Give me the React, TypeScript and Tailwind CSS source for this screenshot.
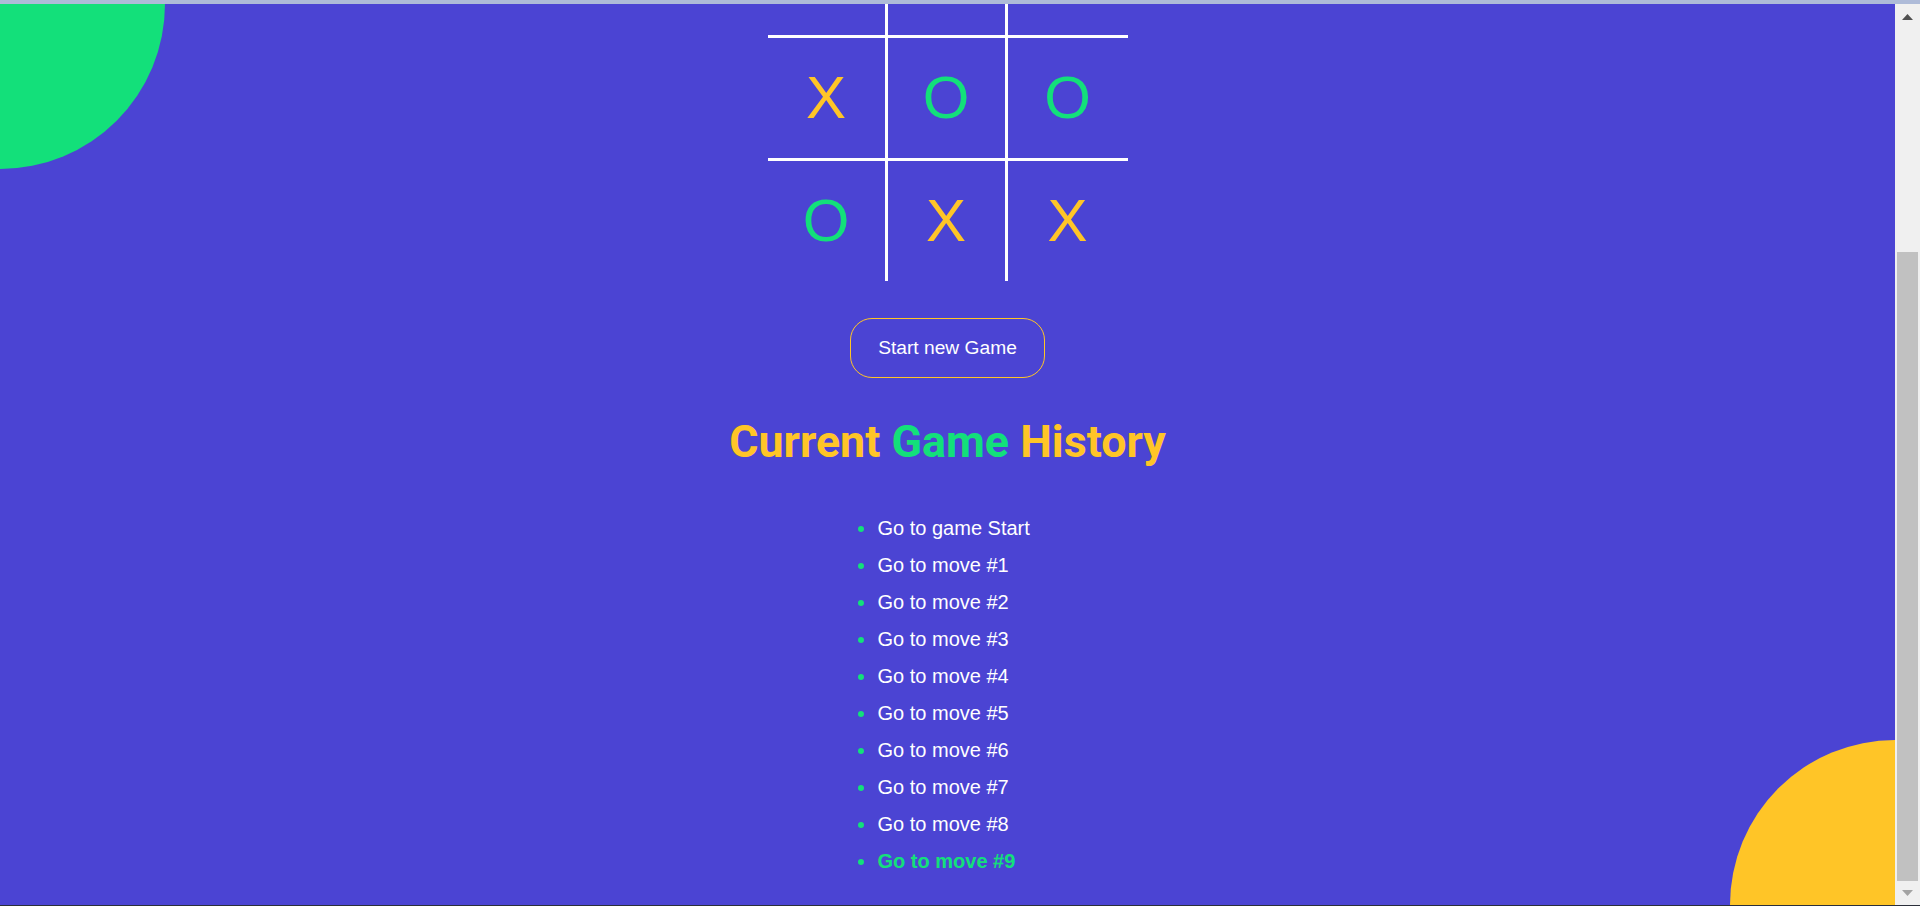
import React from "react";

const board: ("X" | "O" | "")[] = ["", "", "", "X", "O", "O", "O", "X", "X"];

function Cell({ v, i }: { v: "X" | "O" | ""; i: number }) {
  const col = i % 3;
  const row = Math.floor(i / 3);
  const rightBorder = col < 2 ? "border-r-[3px]" : "";
  const bottomBorder = row < 2 ? "border-b-[3px] h-[123px]" : "h-[120px]";
  const color = v === "X" ? "text-[#ffc527]" : "text-[#13e07a]";
  return (
    <div
      className={`w-[120px] border-white flex items-center justify-center text-[60px] leading-none ${rightBorder} ${bottomBorder} ${color}`}
      style={{ fontFamily: '"Liberation Sans", Arial, sans-serif' }}
    >
      {v}
    </div>
  );
}

export default function App() {
  const moves = [
    "Go to game Start",
    "Go to move #1",
    "Go to move #2",
    "Go to move #3",
    "Go to move #4",
    "Go to move #5",
    "Go to move #6",
    "Go to move #7",
    "Go to move #8",
    "Go to move #9",
  ];
  return (
    <div className="h-[906px] w-[1920px] flex flex-col overflow-hidden bg-[#4b44d3]">
      <div className="h-[4px] bg-[#aebbd8]" />
      <div className="flex flex-1 min-h-0">
        <main className="relative flex-1 overflow-hidden flex flex-col items-center">
          <div className="absolute -left-[165px] -top-[165px] w-[330px] h-[330px] rounded-full bg-[#13e07a]" />
          <div className="absolute -right-[165px] -bottom-[165px] w-[330px] h-[330px] rounded-full bg-[#ffc527]" />

          <div className="relative -mt-[89px] grid grid-cols-[120px_120px_120px]">
            {board.map((v, i) => (
              <Cell key={i} v={v} i={i} />
            ))}
          </div>

          <button
            className="relative mt-[37px] w-[195px] h-[60px] rounded-[22px] border border-[#ffc527] text-white text-[19.2px] leading-none"
            style={{ fontFamily: '"Liberation Sans", Arial, sans-serif' }}
          >
            Start new Game
          </button>

          <h2
            className="relative mt-[38px] text-[44.8px] leading-[52px] font-bold text-[#ffc527]"
            style={{ fontFamily: 'Roboto, "Liberation Sans", sans-serif' }}
          >
            Current <span className="text-[#13e07a]">Game</span> History
          </h2>

          <ul
            className="relative mt-[42px] w-[180px] flex flex-col"
            style={{ fontFamily: '"Liberation Sans", Arial, sans-serif' }}
          >
            {moves.map((m, i) => {
              const last = i === moves.length - 1;
              return (
                <li key={m} className="h-[37px] flex items-center gap-[14px]">
                  <span className="w-[6px] h-[6px] rounded-full bg-[#13e07a] shrink-0" />
                  <span
                    className={`text-[20px] leading-[37px] ${
                      last ? "font-bold text-[#13e07a]" : "text-white"
                    }`}
                  >
                    {m}
                  </span>
                </li>
              );
            })}
          </ul>
        </main>

        <div className="w-[25px] bg-[#f0f0f0] flex flex-col items-center">
          <svg className="mt-[10px]" width="11" height="6" viewBox="0 0 11 6">
            <polygon points="5.5,0 11,6 0,6" fill="#505050" />
          </svg>
          <div className="mt-[232px] w-[21px] h-[629px] bg-[#c1c1c1]" />
          <svg className="mt-[9px]" width="11" height="6" viewBox="0 0 11 6">
            <polygon points="0,0 11,0 5.5,6" fill="#a3a3a3" />
          </svg>
        </div>
      </div>
      <div className="h-[1px] bg-[#2b2f3a]" />
    </div>
  );
}
